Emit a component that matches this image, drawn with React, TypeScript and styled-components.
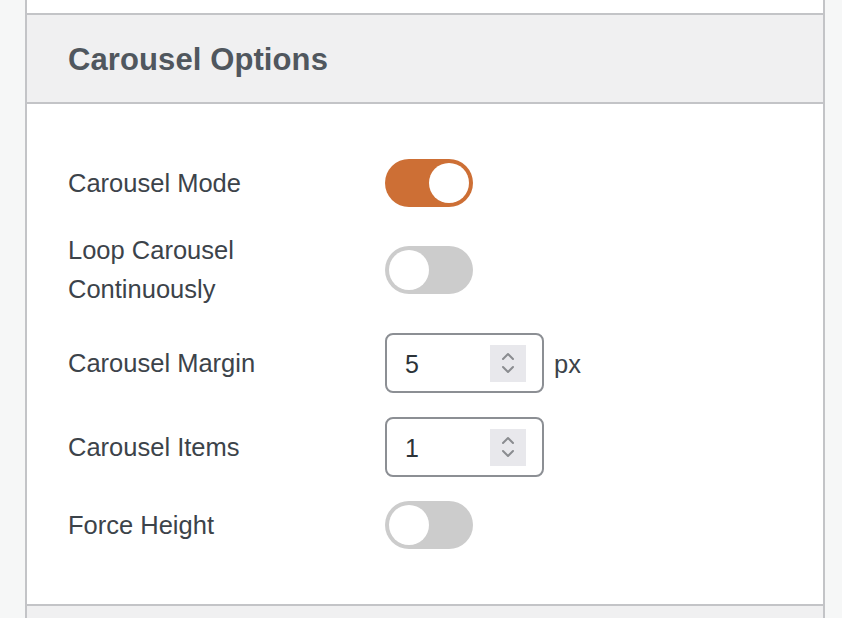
import React, { useState } from "react";
import styled, { createGlobalStyle } from "styled-components";

const Global = createGlobalStyle`
  html, body { margin: 0; padding: 0; }
  body {
    background: #f6f7f7;
    font-family: "Liberation Sans", Arial, sans-serif;
    width: 842px;
    height: 618px;
    overflow: hidden;
  }
`;

const Page = styled.div`
  width: 842px;
  height: 618px;
  padding: 0 17px 0 25px;
  box-sizing: border-box;
`;

const Panel = styled.div`
  border-left: 2px solid #c3c4c7;
  border-right: 2px solid #c3c4c7;
  background: #fff;
  height: 618px;
  box-sizing: border-box;
  display: flex;
  flex-direction: column;
`;

const PrevSection = styled.div`
  height: 13px;
  background: #fff;
  border-bottom: 2px solid #c3c4c7;
`;

const Header = styled.div`
  height: 84px;
  background: #f0f0f1;
  border-bottom: 2px solid #c3c4c7;
  display: flex;
  align-items: center;
  padding: 3px 0 0 41px;
  box-sizing: content-box;
`;

const Title = styled.h2`
  margin: 0;
  font-size: 31px;
  font-weight: 700;
  color: #50575e;
  letter-spacing: 0.1px;
`;

const Body = styled.div`
  padding: 55px 0 55px 41px;
  display: flex;
  flex-direction: column;
  gap: 24px;
  border-bottom: 2px solid #c3c4c7;
`;

const NextSection = styled.div`
  flex: 1;
  background: #f0f0f1;
`;

const Row = styled.div`
  display: flex;
  align-items: center;
`;

const Label = styled.div`
  width: 317px;
  padding-right: 40px;
  box-sizing: border-box;
  font-size: 25.5px;
  line-height: 39px;
  color: #3c434a;
`;

const Control = styled.div`
  display: flex;
  align-items: center;
  gap: 10px;
`;

const Track = styled.button<{ $on: boolean }>`
  width: 88px;
  height: 48px;
  border-radius: 24px;
  border: none;
  padding: 0;
  cursor: pointer;
  position: relative;
  background: ${(p) => (p.$on ? "#cd6f35" : "#cccccc")};
`;

const Knob = styled.span<{ $on: boolean }>`
  position: absolute;
  top: 4px;
  left: ${(p) => (p.$on ? "44px" : "4px")};
  width: 40px;
  height: 40px;
  border-radius: 50%;
  background: #fff;
`;

const NumberBox = styled.div`
  width: 159px;
  height: 60px;
  box-sizing: border-box;
  border: 2px solid #8c8f94;
  border-radius: 8px;
  background: #fff;
  display: flex;
  align-items: center;
  padding: 0 16px 0 18px;
`;

const NumberValue = styled.span`
  flex: 1;
  font-size: 25px;
  color: #2c3338;
  padding-top: 2px;
`;

const Spinner = styled.span`
  width: 36px;
  height: 37px;
  background: #e8e8ec;
  display: flex;
  align-items: center;
  justify-content: center;
`;

const Unit = styled.span`
  font-size: 25.5px;
  color: #3c434a;
  padding-top: 2px;
`;

function Toggle({ initial }: { initial: boolean }) {
  const [on, setOn] = useState(initial);
  return (
    <Track $on={on} onClick={() => setOn(!on)} aria-pressed={on}>
      <Knob $on={on} />
    </Track>
  );
}

function NumberInput({ value }: { value: number }) {
  return (
    <NumberBox>
      <NumberValue>{value}</NumberValue>
      <Spinner>
        <svg width="18" height="26" viewBox="0 0 18 26" fill="none" stroke="#8a8c90" strokeWidth="2" strokeLinecap="round" strokeLinejoin="round">
          <path d="M4 9 L9 4 L14 9" />
          <path d="M4 17 L9 22 L14 17" />
        </svg>
      </Spinner>
    </NumberBox>
  );
}

export default function App() {
  return (
    <>
      <Global />
      <Page>
        <Panel>
          <PrevSection />
          <Header>
            <Title>Carousel Options</Title>
          </Header>
          <Body>
            <Row>
              <Label>Carousel Mode</Label>
              <Control><Toggle initial={true} /></Control>
            </Row>
            <Row>
              <Label>Loop Carousel Continuously</Label>
              <Control><Toggle initial={false} /></Control>
            </Row>
            <Row>
              <Label>Carousel Margin</Label>
              <Control>
                <NumberInput value={5} />
                <Unit>px</Unit>
              </Control>
            </Row>
            <Row>
              <Label>Carousel Items</Label>
              <Control><NumberInput value={1} /></Control>
            </Row>
            <Row>
              <Label>Force Height</Label>
              <Control><Toggle initial={false} /></Control>
            </Row>
          </Body>
          <NextSection />
        </Panel>
      </Page>
    </>
  );
}
